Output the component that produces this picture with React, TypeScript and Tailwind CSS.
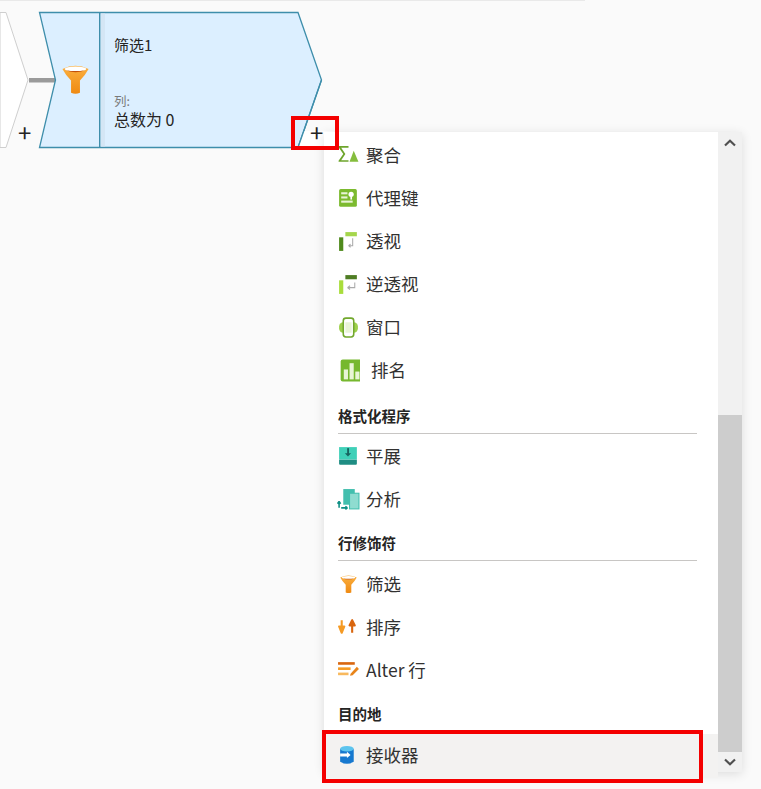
import React from "react";

const F = "font-['Noto_Sans_CJK_SC','Noto_Sans',sans-serif]";

const Funnel = ({ s = 20, id }: { s?: number; id: string }) => (
  <svg className="shrink-0" width={s} height={s * 1.1} viewBox="0 0 20 22">
    <defs>
      <linearGradient id={id} x1="0" y1="0" x2="0" y2="1">
        <stop offset="0" stopColor="#fbb040" />
        <stop offset="1" stopColor="#ef8a12" />
      </linearGradient>
    </defs>
    <path d="M0.300 3 Q10 -1.800 19.700 3 Q17 8 13.300 11.500 V20.500 Q10 22 6.700 20.500 V11.500 Q3 8 0.300 3 Z" fill={`url(#${id})`} />
    <ellipse cx="10" cy="3" rx="8" ry="1.900" fill="#fff" />
    <path d="M3 3.800 Q10 6.800 17 3.800 Q10 5.100 3 3.800 Z" fill="#c2500a" />
  </svg>
);

const I = ({ children, vb = "0 0 22 22" }: { children: React.ReactNode; vb?: string }) => (
  <svg className="shrink-0" width="23" height="23" viewBox={vb}>{children}</svg>
);

const icons: Record<string, React.ReactNode> = {
  agg: (
    <I>
      <path d="M1.500 2 H11 V3.500 H4 L8 9.500 L4 15.500 H11 V17 H1.500 V16 L6 9.500 L1.500 3 Z" fill="#6ea52c" />
      <path d="M16 6.500 L20.500 17 H12 Z" fill="#85bd3d" />
    </I>
  ),
  key: (
    <I>
      <rect x="2" y="2" width="17" height="17" rx="1.500" fill="#7cba2f" />
      <rect x="4" y="5" width="6" height="2" fill="#e8f4d5" />
      <rect x="4" y="9" width="6" height="2" fill="#e8f4d5" />
      <rect x="4" y="13" width="11" height="2" fill="#e8f4d5" />
      <circle cx="13.500" cy="7" r="2.500" fill="#fff" />
      <rect x="12.800" y="8" width="1.600" height="4" fill="#fff" />
    </I>
  ),
  pivot: (
    <I>
      <rect x="8" y="2" width="11" height="4" fill="#a5d64c" />
      <rect x="2" y="7" width="4" height="13" fill="#4f8a1c" />
      <path d="M15 8 V15 H11 M11 15 l2 -1.500 M11 15 l2 1.500" stroke="#aaa" strokeWidth="1" fill="none" />
    </I>
  ),
  unpivot: (
    <I>
      <rect x="8" y="2" width="11" height="4" fill="#4f7d24" />
      <rect x="2" y="7" width="4" height="13" fill="#a9dd3c" />
      <path d="M17 9 V14 H10 M10 14 l2.500 -1.800 M10 14 l2.500 1.800" stroke="#aaa" strokeWidth="1" fill="none" />
    </I>
  ),
  win: (
    <I>
      <rect x="2" y="6" width="18" height="10" rx="4" fill="#9ed04a" />
      <rect x="6" y="2" width="10" height="18" rx="2.500" fill="#fff" stroke="#72a82d" strokeWidth="1.500" />
      <rect x="8" y="6" width="6" height="10" fill="#e9f4d6" />
    </I>
  ),
  rank: (
    <I vb="-3.500 0 22 22">
      <rect x="0" y="0.500" width="21" height="21" rx="2" fill="#76b82e" />
      <rect x="3" y="10" width="4" height="9.500" fill="#e8f5d6" />
      <rect x="8.500" y="4" width="4" height="15.500" fill="#e8f5d6" />
      <rect x="14" y="12" width="4" height="7.500" fill="#e8f5d6" />
    </I>
  ),
  flat: (
    <I>
      <path d="M2 2 H19 V14 H2 Z" fill="#3fd0b8" />
      <path d="M2 14 H19 V18 Q19 19 18 19 H3 Q2 19 2 18 Z" fill="#1f8d83" />
      <rect x="9.700" y="3" width="1.800" height="6" fill="#17635f" />
      <path d="M7.500 8 H13.500 L10.500 11 Z" fill="#17635f" />
    </I>
  ),
  parse: (
    <I>
      <rect x="6" y="1" width="11" height="15" fill="#43bfae" />
      <rect x="12" y="5" width="9" height="15" fill="#8fdcd0" stroke="#43bfae" />
      <path d="M2 14 V19 M2 13 l-1.500 2 M2 13 l1.500 2 M4 19 H10 M10 19 l-2 -1.500 M10 19 l-2 1.500" stroke="#0f8f85" strokeWidth="1.500" fill="none" />
    </I>
  ),
  filter: <Funnel s={17} id="menu-funnel" />,
  sort: (
    <I>
      <path d="M4.500 4 V11 M2 10 H7 L4.500 16 Z" stroke="#f59a23" strokeWidth="2" fill="#f59a23" strokeLinejoin="round" />
      <path d="M14.500 16 V9 M12 9 H17 L14.500 4 Z" stroke="#d9660f" strokeWidth="2" fill="#d9660f" strokeLinejoin="round" />
    </I>
  ),
  alter: (
    <I>
      <rect x="1" y="3" width="16" height="2.500" fill="#d9660f" />
      <rect x="1" y="8" width="12" height="2.500" fill="#f59a23" />
      <rect x="1" y="13" width="10" height="2.500" fill="#f8b95e" />
      <path d="M13 14 L19 7.500 L21 9.500 L15 15.500 L12.500 16 Z" fill="#e8841a" />
    </I>
  ),
  sink: (
    <I>
      <path d="M3 5 Q9.500 1 16 5 V17 Q9.500 21 3 17 Z" fill="#1678cf" />
      <ellipse cx="9.500" cy="4.500" rx="6.500" ry="2.600" fill="#5cc4ee" />
      <path d="M3 9 H9.500 V7.500 L13 10.500 L9.500 13.500 V12 H3 Z" fill="#fff" />
    </I>
  ),
};

const Row = ({ icon, label, h = "h-[43px]", gap = "gap-[8px]", shift = "" }: { icon: string; label: string; h?: string; gap?: string; shift?: string }) => (
  <div className={`flex items-center pl-[15px] ${h} ${gap}`}>
    <span className={`flex w-[19px] shrink-0 items-center justify-center overflow-visible ${shift}`}>{icons[icon]}</span>
    <span className={`whitespace-nowrap text-[17.500px] text-[#323130] ${shift}`}>{label}</span>
  </div>
);

const Head = ({ label, line = true, h }: { label: string; line?: boolean; h: string }) => (
  <div className={`flex flex-col justify-end pl-[14px] pr-[21px] ${h}`}>
    <div className={`text-[14.500px] font-bold leading-[20px] text-[#252423] ${line ? "border-b border-[#c8c6c4] pb-[7px]" : "pb-[9px]"}`}>{label}</div>
  </div>
);

export default function App() {
  return (
    <div className={`relative h-[789px] w-[761px] overflow-hidden bg-[#fafafa] ${F}`}>
      <div className="absolute left-0 top-0 h-px w-[585px] bg-[#e9e9e9]" />

      {/* data flow canvas nodes */}
      <svg className="absolute left-0 top-0" width="340" height="155" viewBox="0 0 340 155">
        <path d="M0 12.500 H6 L28 80 L6 147.500 H0 Z" fill="#fff" stroke="#cfcfcf" />
        <rect x="29" y="78" width="26" height="4.500" fill="#9a9a9a" />
        <path d="M39.500 12.500 H298 L321.500 80 L298 147.500 H39.500 L55.500 80 Z" fill="#dcefff" stroke="#3e8eab" strokeWidth="1.300" />
        <rect x="99" y="13" width="1.400" height="134" fill="#3e8eab" />
        <rect x="101" y="13" width="4" height="134" fill="#cfe0ee" opacity="0.6" />
        <path d="M304 131 H334 V148 H298 Z" fill="#fff" />
        <path d="M321.500 80 L298 147.500" fill="none" stroke="#3e8eab" strokeWidth="1.300" />
      </svg>
      <div className="absolute left-[62px] top-[65px]"><Funnel s={27} id="node-funnel" /></div>
      <div className="absolute left-[114px] top-[35px] text-[15px] leading-[20px] text-[#252423]">筛选1</div>
      <div className="absolute left-[114px] top-[94px] text-[12.500px] leading-[14px] text-[#7a7a7a]">列:</div>
      <div className="absolute left-[114px] top-[109px] text-[16px] leading-[20px] text-[#252423]">总数为 0</div>
      <div className="absolute left-[18px] top-[120px] text-[24px] leading-[24px] text-[#252423]">+</div>
      <div className="absolute left-[310px] top-[120px] text-[24px] leading-[24px] text-[#252423]">+</div>

      {/* dropdown menu */}
      <div className="absolute left-[324px] top-[132px] flex h-[640px] w-[418px] bg-white shadow-[0_2px_10px_rgba(0,0,0,0.12)]">
        <div className="w-[394px] pt-[2px]">
          <Row icon="agg" label="聚合" />
          <Row icon="key" label="代理键" />
          <Row icon="pivot" label="透视" />
          <Row icon="unpivot" label="逆透视" />
          <Row icon="win" label="窗口" />
          <Row icon="rank" label="排名" gap="gap-[13px]" />
          <Head label="格式化程序" h="h-[42px]" />
          <Row icon="flat" label="平展" shift="translate-y-px" />
          <Row icon="parse" label="分析" shift="translate-y-px" />
          <Head label="行修饰符" h="h-[41px]" />
          <div className="h-px" />
          <Row icon="filter" label="筛选" shift="translate-y-px" />
          <Row icon="sort" label="排序" shift="translate-y-px" />
          <Row icon="alter" label="Alter 行" shift="translate-y-px" />
          <Head label="目的地" line={false} h="h-[42px]" />
          <div className="h-px" />
          <Row icon="sink" label="接收器" h="h-[44px] bg-[#f3f2f1]" shift="-translate-y-px" />
        </div>
        <div className="flex w-[24px] flex-col bg-[#f1f1f1]">
          <div className="flex h-[22px] items-center justify-center">
            <svg width="12" height="8" viewBox="0 0 12 8"><path d="M1 6.500 L6 1.800 L11 6.500" fill="none" stroke="#505050" strokeWidth="2.200" /></svg>
          </div>
          <div className="h-[261px]" />
          <div className="flex-1 bg-[#cdcdcd]" />
          <div className="flex h-[20px] items-center justify-center">
            <svg width="12" height="8" viewBox="0 0 12 8"><path d="M1 1.500 L6 6.200 L11 1.500" fill="none" stroke="#505050" strokeWidth="2.200" /></svg>
          </div>
        </div>
      </div>

      {/* red highlight callouts */}
      <div className="absolute left-[291px] top-[116px] h-[34px] w-[48px] border-[4px] border-[#f40000]" />
      <div className="absolute left-[322px] top-[730px] h-[53px] w-[381px] border-[4px] border-[#f40000]" />
    </div>
  );
}
